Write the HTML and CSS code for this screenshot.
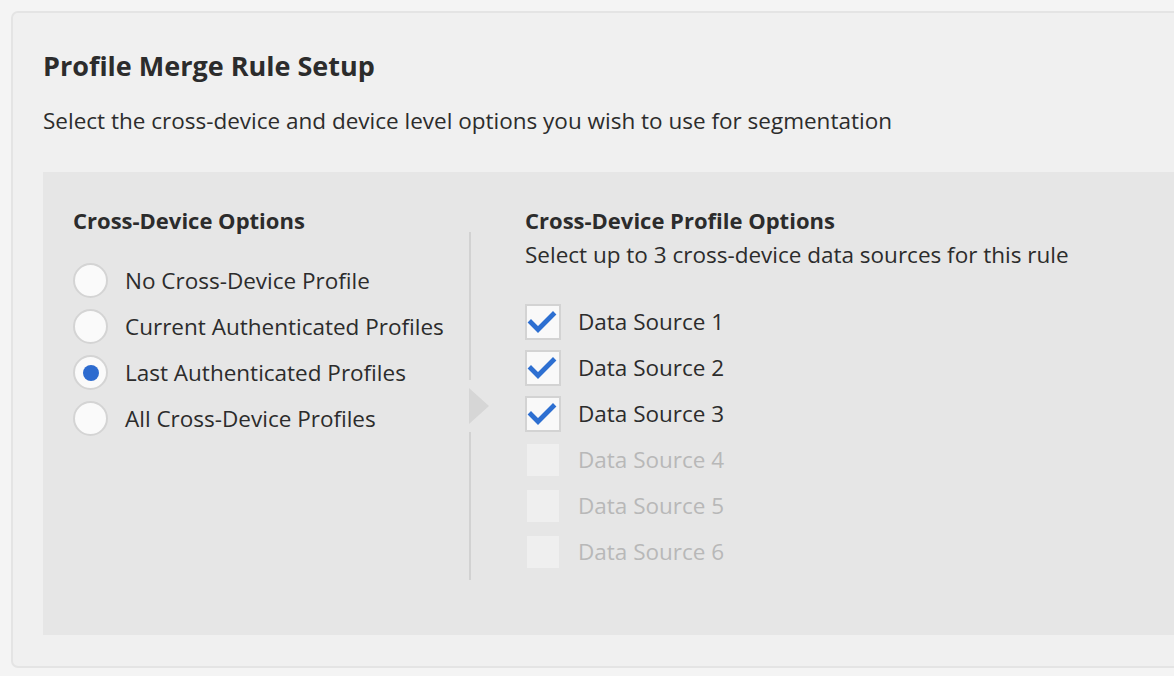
FILE: index.html
```html
<!DOCTYPE html>
<html lang="en">
<head>
<meta charset="utf-8">
<title>Profile Merge Rule Setup</title>
<link rel="stylesheet" href="styles.css">
</head>
<body>
<div class="card">
  <h1 class="title">Profile Merge Rule Setup</h1>
  <p class="subtitle">Select the cross-device and device level options you wish to use for segmentation</p>
  <div class="panel">
    <div class="col-left">
      <h2 class="section-title">Cross-Device Options</h2>
      <ul class="options">
        <li class="option"><span class="radio"></span><span class="label">No Cross-Device Profile</span></li>
        <li class="option"><span class="radio"></span><span class="label">Current Authenticated Profiles</span></li>
        <li class="option"><span class="radio checked"></span><span class="label">Last Authenticated Profiles</span></li>
        <li class="option"><span class="radio"></span><span class="label">All Cross-Device Profiles</span></li>
      </ul>
    </div>
    <div class="divider"><span class="arrow"></span></div>
    <div class="col-right">
      <h2 class="section-title">Cross-Device Profile Options</h2>
      <p class="section-sub">Select up to 3 cross-device data sources for this rule</p>
      <ul class="options checks">
        <li class="option"><span class="checkbox checked"><svg viewBox="0 0 36 36" width="36" height="36"><path d="M6 18.5 L13 25.5 L28 10.5" fill="none" stroke="#2d6fd1" stroke-width="4.8" stroke-linecap="square" stroke-linejoin="miter"/></svg></span><span class="label">Data Source 1</span></li>
        <li class="option"><span class="checkbox checked"><svg viewBox="0 0 36 36" width="36" height="36"><path d="M6 18.5 L13 25.5 L28 10.5" fill="none" stroke="#2d6fd1" stroke-width="4.8" stroke-linecap="square" stroke-linejoin="miter"/></svg></span><span class="label">Data Source 2</span></li>
        <li class="option"><span class="checkbox checked"><svg viewBox="0 0 36 36" width="36" height="36"><path d="M6 18.5 L13 25.5 L28 10.5" fill="none" stroke="#2d6fd1" stroke-width="4.8" stroke-linecap="square" stroke-linejoin="miter"/></svg></span><span class="label">Data Source 3</span></li>
        <li class="option disabled"><span class="checkbox"></span><span class="label">Data Source 4</span></li>
        <li class="option disabled"><span class="checkbox"></span><span class="label">Data Source 5</span></li>
        <li class="option disabled"><span class="checkbox"></span><span class="label">Data Source 6</span></li>
      </ul>
    </div>
  </div>
</div>
</body>
</html>
```
FILE: styles.css
```css
html, body {
  margin: 0;
  padding: 0;
  overflow: hidden;
}
body {
  background: #f4f4f4;
  font-family: "Open Sans", "Lato", sans-serif;
  color: #2c2c2c;
  width: 1174px;
  height: 676px;
}
.card {
  margin: 11px 0 0 11px;
  width: 1250px;
  height: 657px;
  box-sizing: border-box;
  border: 2px solid #e4e4e4;
  border-radius: 7px;
  background: #f0f0f0;
  padding: 36px 0 0 30px;
}
.title {
  margin: 0;
  font-size: 27px;
  line-height: 34px;
  font-weight: 700;
  color: #2c2c2c;
}
.subtitle {
  margin: 24px 0 0;
  font-size: 22.5px;
  line-height: 28px;
  color: #2c2c2c;
}
.panel {
  margin-top: 37px;
  height: 463px;
  background: #e6e6e6;
  display: flex;
  padding: 34px 0 0 30px;
  box-sizing: border-box;
}
.col-left {
  width: 396px;
  flex: none;
}
.section-title {
  margin: 0;
  font-size: 22px;
  line-height: 28px;
  font-weight: 700;
  color: #2c2c2c;
}
.options {
  list-style: none;
  margin: 0;
  padding: 0;
  display: flex;
  flex-direction: column;
  gap: 11px;
}
.col-left .options {
  margin-top: 29px;
}
.option {
  display: flex;
  align-items: center;
  gap: 17px;
  height: 35px;
  font-size: 22.5px;
}
.label {
  line-height: 28px;
}
.radio {
  width: 35px;
  height: 35px;
  box-sizing: border-box;
  border-radius: 50%;
  border: 2px solid #d4d4d4;
  background: #fafafa;
  display: flex;
  align-items: center;
  justify-content: center;
  flex: none;
}
.radio.checked::after {
  content: "";
  width: 16px;
  height: 16px;
  border-radius: 50%;
  background: #2d6bcf;
}
.divider {
  width: 2px;
  background: #d2d2d2;
  margin-top: 26px;
  height: 348px;
  position: relative;
  flex: none;
}
.arrow {
  position: absolute;
  left: 0;
  top: 148px;
  width: 22px;
  height: 52px;
  background: #e6e6e6;
}
.arrow::after {
  content: "";
  position: absolute;
  left: 0;
  top: 8px;
  border-top: 18px solid transparent;
  border-bottom: 18px solid transparent;
  border-left: 20px solid #d6d6d6;
}
.col-right {
  padding-left: 54px;
}
.section-sub {
  margin: 7px 0 0;
  font-size: 22.5px;
  line-height: 28px;
  color: #2c2c2c;
}
.checks {
  margin-top: 35px;
}
.checkbox {
  width: 36px;
  height: 36px;
  box-sizing: border-box;
  border: 2px solid #d3d3d3;
  background: #f9f9f9;
  flex: none;
  position: relative;
}
.checkbox svg {
  position: absolute;
  left: -2px;
  top: -2px;
}
.disabled .checkbox {
  border-color: #e6e6e6;
  background: #efefef;
}
.disabled .label {
  color: #b8b8b8;
}
.checks .option {
  gap: 17px;
  height: 36px;
  margin-bottom: -1px;
}
```
